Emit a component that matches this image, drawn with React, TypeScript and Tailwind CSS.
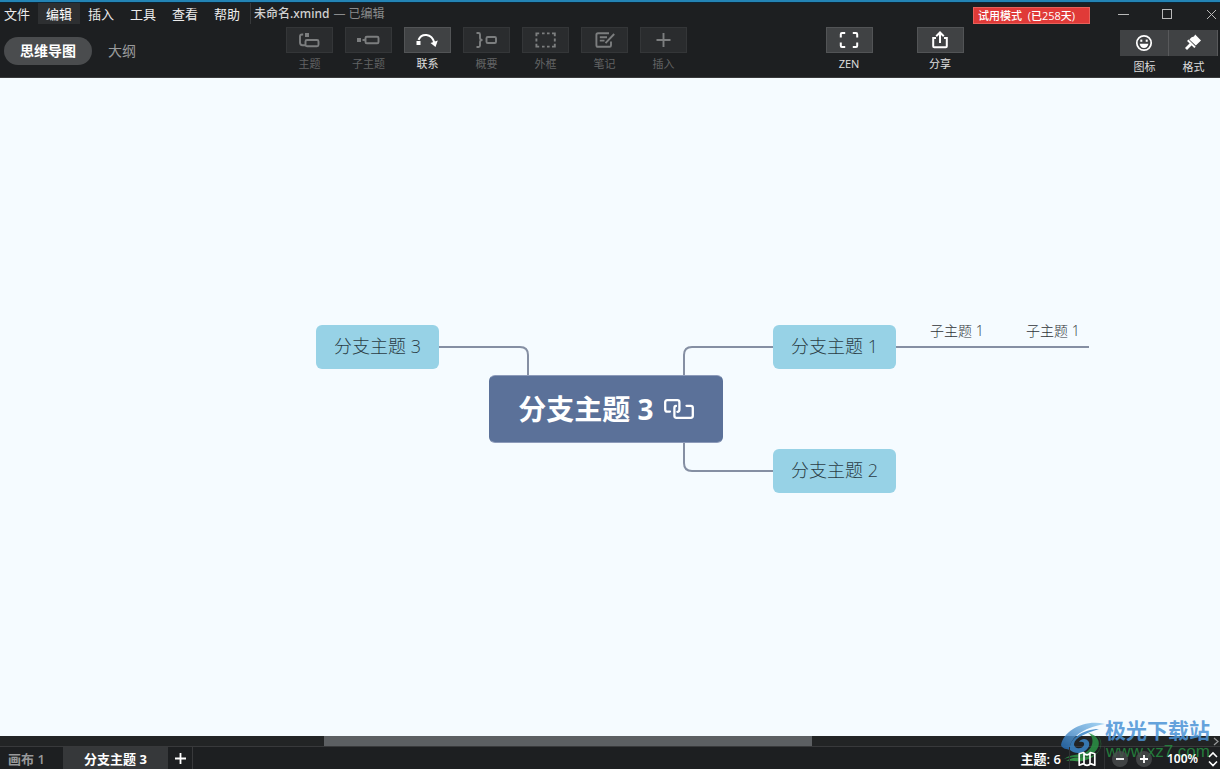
import type { ReactNode } from "react";

const menus = ["文件", "编辑", "插入", "工具", "查看", "帮助"];

function Icon({ children }: { children: ReactNode }) {
  return (
    <svg width="24" height="20" viewBox="0 0 24 20" fill="none" stroke="currentColor" strokeWidth="1.9" aria-hidden="true">
      {children}
    </svg>
  );
}

const TopicIcon = (
  <Icon>
    <path d="M5.2 4.5H4Q2 4.5 2 6.5V12.5Q2 15.2 4.5 15.2H7" />
    <rect x="7" y="3" width="4" height="4" fill="currentColor" stroke="none" />
    <rect x="7.5" y="10" width="13" height="6.3" rx="1.5" />
  </Icon>
);
const SubtopicIcon = (
  <Icon>
    <rect x="0" y="8" width="4" height="4" fill="currentColor" stroke="none" />
    <path d="M5.5 10H8.5" />
    <rect x="8.5" y="6.7" width="13" height="6.6" rx="1.3" />
  </Icon>
);
const RelationIcon = (
  <Icon>
    <rect x="0.5" y="11" width="4" height="4" fill="currentColor" stroke="none" />
    <path d="M2.5 9.8C5.5 3.2 15.5 2.5 18.5 13" strokeWidth="2" />
    <path d="M14.5 13L21.8 10.5L19.5 17Z" fill="currentColor" stroke="none" />
  </Icon>
);
const SummaryIcon = (
  <Icon>
    <path d="M1.5 3H3.5Q5 3 5 4.5V8Q5 10 7.5 10Q5 10 5 12V15.5Q5 17 3.5 17H1.5" />
    <rect x="11.5" y="7" width="9.5" height="6" rx="1.3" />
  </Icon>
);
const BoundaryIcon = (
  <Icon>
    <path d="M2.4 6.2V3.4H5.2M8 3.4H10.6M13 3.4H15.6M18 3.4H20.8V6.2M20.8 8.6V11.4M20.8 13.8V16.6H18M15.6 16.6H13M10.6 16.6H8M5.2 16.6H2.4V13.8M2.4 11.4V8.6" />
  </Icon>
);
const NoteIcon = (
  <Icon>
    <path d="M16 3.2H5Q3.4 3.2 3.4 4.8V15.2Q3.4 16.8 5 16.8H16.6Q18 16.8 18 15.2V11.5M6.8 7.2H14M6.8 10.6H11.5M12.5 13.2L21.2 4" />
  </Icon>
);
const InsertIcon = (
  <Icon>
    <path d="M11.5 3V17M4.5 10H18.5" />
  </Icon>
);
const ZenIcon = (
  <Icon>
    <path d="M3.8 7.5V4.2Q3.8 3 5 3H8.2M15.8 3H19Q20.2 3 20.2 4.2V7.5M20.2 12.5V15.8Q20.2 17 19 17H15.8M8.2 17H5Q3.8 17 3.8 15.8V12.5" strokeWidth="2" />
  </Icon>
);
const ShareIcon = (
  <Icon>
    <path d="M8 8H5.2V16.2Q5.2 17.2 6.2 17.2H17.8Q18.8 17.2 18.8 16.2V8H16M12 13V3M8.2 6.2L12 2.5L15.8 6.2" strokeWidth="2" />
  </Icon>
);
const SmileIcon = (
  <Icon>
    <circle cx="12" cy="10" r="7.2" strokeWidth="1.7" />
    <rect x="8.3" y="6.6" width="2" height="2.2" fill="currentColor" stroke="none" />
    <rect x="13.7" y="6.6" width="2" height="2.2" fill="currentColor" stroke="none" />
    <path d="M7.6 10.8H16.4Q15.6 15 12 15Q8.4 15 7.6 10.8Z" fill="currentColor" stroke="none" />
  </Icon>
);
const FormatIcon = (
  <Icon>
    <path d="M10.6 4.2L13 3.6L14.2 1.6L20 7.6L14.8 12.6L8.4 6.4Z" fill="currentColor" stroke="none" />
    <path d="M6.8 7.2L14 14.4" strokeWidth="2" />
    <path d="M10 11L5 16" strokeWidth="2.8" />
  </Icon>
);

function Tool({ label, icon, enabled = false }: { label: string; icon: ReactNode; enabled?: boolean }) {
  return (
    <button type="button" disabled={!enabled} className="group flex w-[47px] flex-col items-center gap-1 text-[#e0e0e0] disabled:text-[#626364]">
      <span className="flex h-[26px] w-full items-center justify-center border border-[#525456] bg-[#404244] text-white group-disabled:border-[#343638] group-disabled:bg-[#2a2c2e] group-disabled:text-[#7c7e7f]">
        {icon}
      </span>
      <span className="text-[11px] leading-[14px] whitespace-nowrap">{label}</span>
    </button>
  );
}

function PanelTool({ label, icon }: { label: string; icon: ReactNode }) {
  return (
    <button type="button" className="flex w-[49px] flex-col items-center gap-1 text-[#dcdcdc]">
      <span className="flex h-[26px] w-full items-center justify-center border-r border-[#58595b] bg-[#404244] text-white">{icon}</span>
      <span className="text-[11px] leading-[14px]">{label}</span>
    </button>
  );
}

function Header() {
  return (
    <header className="flex flex-col border-t-2 border-b border-t-[#2384b5] border-b-[#38393a] bg-[#1d1f21]">
      <div className="flex h-[25px] border-t border-[#0d2535] text-[13px] leading-5 text-[#ececec]">
        <nav className="flex shrink-0" aria-label="菜单">
          {menus.map((m, i) => (
            <button key={m} type="button" className={i === 1 ? "h-[21px] bg-[#2d2f31] px-2 leading-5 text-white" : i === 0 ? "h-[21px] pr-2 pl-1 leading-5" : "h-[21px] px-2 leading-5"}>
              {m}
            </button>
          ))}
        </nav>
        <div className="ml-[2px] flex h-[21px] shrink-0 border-l border-[#36383a] pl-[3px] text-[12px] leading-[22px]">
          <span className="font-['Noto_Sans','Noto_Sans_CJK_SC',sans-serif] font-medium text-[#d2d2d2]">未命名.xmind</span>
          <span className="ml-1 text-[#8a8b8c]">— 已编辑</span>
        </div>
        <div className="ml-auto flex h-[22px] items-center">
          <span className="mt-[3px] h-[17px] w-[117px] border border-[#e8605a] bg-[#e03a38] pl-1 text-[11px] leading-[16px] font-medium whitespace-pre text-white">试用模式  (已258天)</span>
          <div className="ml-7 flex items-center gap-[33px] text-[#b9b9b9]">
            <button type="button" aria-label="最小化">
              <svg width="11" height="11" viewBox="0 0 11 11" stroke="currentColor" fill="none"><path d="M0 5.5H11" /></svg>
            </button>
            <button type="button" aria-label="最大化">
              <svg width="11" height="11" viewBox="0 0 11 11" stroke="currentColor" fill="none"><rect x="0.5" y="0.5" width="9" height="9" /></svg>
            </button>
            <button type="button" aria-label="关闭" className="mr-[3px]">
              <svg width="11" height="11" viewBox="0 0 11 11" stroke="currentColor" fill="none"><path d="M1 1L10 10M10 1L1 10" /></svg>
            </button>
          </div>
        </div>
      </div>
      <div className="flex h-[50px]">
        <div className="flex h-12 w-[286px] shrink-0 items-center gap-4 pl-1 text-[14px] leading-7">
          <button type="button" className="h-7 w-[88px] rounded-full bg-[#4a4c4e] font-bold text-white">思维导图</button>
          <button type="button" className="text-[#9a9b9c]">大纲</button>
        </div>
        <div className="flex shrink-0 items-start gap-3">
          <Tool label="主题" icon={TopicIcon} />
          <Tool label="子主题" icon={SubtopicIcon} />
          <Tool label="联系" icon={RelationIcon} enabled />
          <Tool label="概要" icon={SummaryIcon} />
          <Tool label="外框" icon={BoundaryIcon} />
          <Tool label="笔记" icon={NoteIcon} />
          <Tool label="插入" icon={InsertIcon} />
        </div>
        <div className="flex flex-1 items-start justify-center gap-11 pr-[18px]">
          <Tool label="ZEN" icon={ZenIcon} enabled />
          <Tool label="分享" icon={ShareIcon} enabled />
        </div>
        <div className="mr-[2px] flex shrink-0 items-start pt-[3px]">
          <PanelTool label="图标" icon={SmileIcon} />
          <PanelTool label="格式" icon={FormatIcon} />
        </div>
      </div>
    </header>
  );
}

const branch = "absolute flex h-11 w-[123px] items-center justify-center rounded-md bg-[#97d2e6] pb-0.5 text-[18px] leading-6 font-light text-[#2b3d45]";
const leaf = "absolute top-0 text-[14px] leading-[22px] font-light text-[#2f3338]";

function MindMap() {
  return (
    <main className="flex flex-1 items-center justify-center overflow-hidden bg-[#f5fbff] pb-0.5 pl-[185px]">
      <div className="relative h-[173px] w-[773px] shrink-0">
        <svg className="absolute inset-0" width="773" height="173" viewBox="0 0 773 173" fill="none" stroke="#858fa3" strokeWidth="2" aria-hidden="true">
          <path d="M123 27H204Q212 27 212 35V60M368 60V35Q368 27 376 27H773M368 110V143Q368 151 376 151H457" />
        </svg>
        <div className={`${branch} top-[5px] left-0`}>分支主题 3</div>
        <div className={`${branch} top-[5px] left-[457px]`}>分支主题 1</div>
        <div className={`${branch} top-[129px] left-[457px]`}>分支主题 2</div>
        <div className={`${leaf} left-[614px]`}>子主题 1</div>
        <div className={`${leaf} left-[710px]`}>子主题 1</div>
        <div className="absolute top-[55px] left-[173px] flex h-[68px] w-[234px] items-center justify-center gap-2.5 rounded-md border border-[#8d9bba] border-x-transparent bg-[#5b7199] text-[28px] leading-9 font-bold text-white">
          <span>分支主题 3</span>
          <svg width="30" height="20" viewBox="0 0 30 20" fill="none" stroke="currentColor" strokeWidth="2.3" strokeLinecap="round" aria-hidden="true">
            <path d="M6 12.6H3.2Q1.2 12.6 1.2 10.6V3.2Q1.2 1.2 3.2 1.2H13.4Q15.4 1.2 15.4 3.2V10.6Q15.4 12.8 13.4 12.8" />
            <path d="M22.5 6.8H26.8Q28.8 6.8 28.8 8.8V16.8Q28.8 18.8 26.8 18.8H12.4Q10.4 18.8 10.4 16.8V9Q10.4 7 12 7" />
          </svg>
        </div>
      </div>
    </main>
  );
}

function Watermark() {
  return (
    <div className="pointer-events-none absolute right-[10px] bottom-[7px] flex items-end opacity-85">
      <svg width="44" height="40" viewBox="0 0 44 40" aria-hidden="true">
        <defs>
          <linearGradient id="blue" x1="0" y1="1" x2="1" y2="0">
            <stop offset="0" stopColor="#1f66ad" />
            <stop offset="1" stopColor="#9ad0f5" />
          </linearGradient>
          <linearGradient id="green" x1="0" y1="1" x2="1" y2="0">
            <stop offset="0" stopColor="#3fae52" />
            <stop offset="1" stopColor="#1d7f34" />
          </linearGradient>
        </defs>
        <path d="M44 2C24-3 3 8 0 23C1 27 6 27 9 28C8 17 20 6 44 2Z" fill="url(#blue)" />
        <path d="M9 28C7 17 22 7 38 7C26 11 14 15 13 22C13 27 21 28 23 23C24 20 21 19 18 20C22 14 30 18 28 24C25 32 14 33 9 28Z" fill="#3b86c8" />
        <path d="M27 11C43 10 44 31 30 34C20 36 12 34 5 39C13 38 18 41 25 38C45 32 45 11 27 11Z" fill="url(#green)" />
        <path d="M27 11C34 15 33 27 23 31C18 33 9 32 3 37C12 34 18 36 27 34C41 29 42 14 27 11Z" fill="#2b9145" />
      </svg>
      <div className="flex flex-col items-end">
        <span className="text-[21px] leading-6 font-bold text-[#4b93d6]">极光下载站</span>
        <span className="font-['Liberation_Sans',sans-serif] text-[17px] leading-5 text-[#268c40]">www.xz7.com</span>
      </div>
    </div>
  );
}

function Footer() {
  return (
    <footer className="relative shrink-0 bg-[#1d1f21] text-white">
      <div className="flex h-[11px] border-b border-[#38393b] bg-[#222425]">
        <div className="ml-[324px] h-[10px] w-[40%] bg-[#5c5f62]" />
        <svg className="mt-px ml-auto" width="8" height="9" viewBox="0 0 8 9" fill="none" stroke="#98999a" strokeWidth="1.2" aria-hidden="true"><path d="M2 1L6 4.5L2 8" /></svg>
      </div>
      <Watermark />
      <div className="relative flex h-[22px] items-stretch text-[13px] leading-6">
        <button type="button" className="w-[63px] pl-2 text-left font-semibold text-[#98999a]">画布 1</button>
        <button type="button" className="w-[105px] bg-[#36383a] font-bold">分支主题 3</button>
        <button type="button" aria-label="新建画布" className="flex w-[25px] items-center justify-center border-r border-[#38393b]">
          <svg width="11" height="11" viewBox="0 0 11 11" stroke="currentColor" strokeWidth="1.8" aria-hidden="true"><path d="M5.5 0V11M0 5.5H11" /></svg>
        </button>
        <span className="ml-auto border-r border-[#303234] pr-2 font-semibold">主题: 6</span>
        <button type="button" aria-label="导航图" className="flex w-[35px] items-center justify-center border-r border-[#303234]">
          <svg className="mt-0.5" width="18" height="16" viewBox="0 0 18 16" fill="none" stroke="currentColor" strokeWidth="1.7" strokeLinejoin="round" aria-hidden="true"><path d="M1.2 2.8L5.5 1.5Q7 3.8 9 3.8Q11 3.8 12.5 1.5L16.8 2.8V14.2L12.5 12.6Q11 14.4 9 14.4Q7 14.4 5.5 12.6L1.2 14.2ZM6 2V12.8M12 2V12.8" /></svg>
        </button>
        <div className="flex items-center gap-2 pt-0.5 pl-[7px]">
          <button type="button" aria-label="缩小" className="flex size-4 items-center justify-center rounded-full bg-[#4a4c4e]/80">
            <svg width="8" height="8" viewBox="0 0 8 8" stroke="currentColor" strokeWidth="1.8" aria-hidden="true"><path d="M0 4H8" /></svg>
          </button>
          <button type="button" aria-label="放大" className="flex size-4 items-center justify-center rounded-full bg-[#4a4c4e]/80">
            <svg width="8" height="8" viewBox="0 0 8 8" stroke="currentColor" strokeWidth="1.8" aria-hidden="true"><path d="M0 4H8M4 0V8" /></svg>
          </button>
        </div>
        <button type="button" className="ml-[15px] flex items-center gap-2.5 pt-0.5 pr-0.5 font-['Noto_Sans',sans-serif] text-[12px] font-semibold">
          <span>100%</span>
          <svg width="10" height="16" viewBox="0 0 10 16" fill="none" stroke="currentColor" strokeWidth="1.6" aria-hidden="true"><path d="M1 6L5 2L9 6M1 10.5L5 14.5L9 10.5" /></svg>
        </button>
      </div>
    </footer>
  );
}

export default function App() {
  return (
    <div className="flex h-screen flex-col overflow-hidden font-['Open_Sans','Noto_Sans_CJK_SC',sans-serif]">
      <Header />
      <MindMap />
      <Footer />
    </div>
  );
}
